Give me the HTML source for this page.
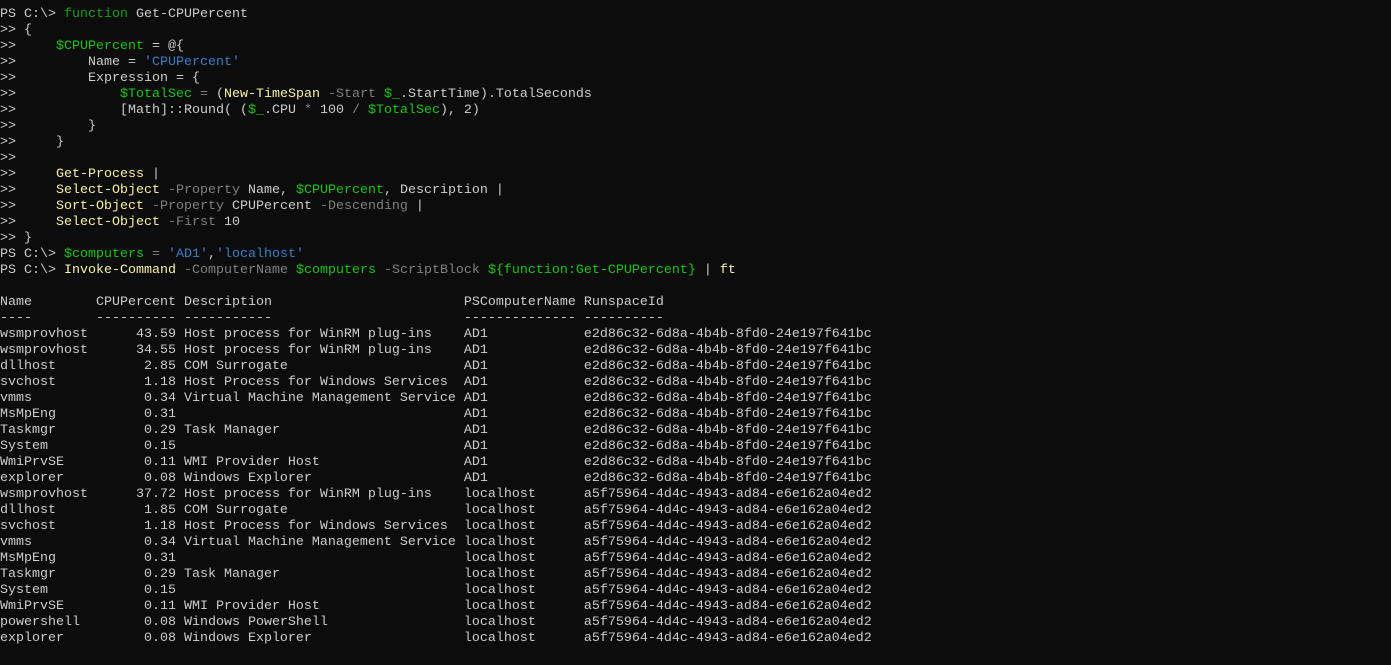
<!DOCTYPE html>
<html><head><style>
html,body{margin:0;padding:0;background:#0c0c0c;width:1391px;height:665px;overflow:hidden}
pre{margin:0;padding:7px 0 0 0;font-family:"Liberation Mono",monospace;font-size:13.33px;line-height:16px;color:#cccccc;white-space:pre}
.g{color:#16c60c}.gd{color:#13a10e}.y{color:#f9f1a5}.b{color:#3a7fc8}.p{color:#808080}
</style></head><body><pre>PS C:\&gt; <span class="gd">function</span> Get-CPUPercent
&gt;&gt; {
&gt;&gt;     <span class="g">$CPUPercent</span> = @{
&gt;&gt;         Name = <span class="b">'CPUPercent'</span>
&gt;&gt;         Expression = {
&gt;&gt;             <span class="g">$TotalSec</span> <span class="p">=</span> (<span class="y">New-TimeSpan</span> <span class="p">-Start</span> <span class="g">$_</span>.StartTime).TotalSeconds
&gt;&gt;             [Math]::Round( (<span class="g">$_</span>.CPU <span class="p">*</span> 100 <span class="p">/</span> <span class="g">$TotalSec</span>), 2)
&gt;&gt;         }
&gt;&gt;     }
&gt;&gt;
&gt;&gt;     <span class="y">Get-Process</span> |
&gt;&gt;     <span class="y">Select-Object</span> <span class="p">-Property</span> Name, <span class="g">$CPUPercent</span>, Description |
&gt;&gt;     <span class="y">Sort-Object</span> <span class="p">-Property</span> CPUPercent <span class="p">-Descending</span> |
&gt;&gt;     <span class="y">Select-Object</span> <span class="p">-First</span> 10
&gt;&gt; }
PS C:\&gt; <span class="g">$computers</span> <span class="p">=</span> <span class="b">'AD1'</span>,<span class="b">'localhost'</span>
PS C:\&gt; <span class="y">Invoke-Command</span> <span class="p">-ComputerName</span> <span class="g">$computers</span> <span class="p">-ScriptBlock</span> <span class="g">${function:Get-CPUPercent}</span> | <span class="y">ft</span>

Name        CPUPercent Description                        PSComputerName RunspaceId
----        ---------- -----------                        -------------- ----------
wsmprovhost      43.59 Host process for WinRM plug-ins    AD1            e2d86c32-6d8a-4b4b-8fd0-24e197f641bc
wsmprovhost      34.55 Host process for WinRM plug-ins    AD1            e2d86c32-6d8a-4b4b-8fd0-24e197f641bc
dllhost           2.85 COM Surrogate                      AD1            e2d86c32-6d8a-4b4b-8fd0-24e197f641bc
svchost           1.18 Host Process for Windows Services  AD1            e2d86c32-6d8a-4b4b-8fd0-24e197f641bc
vmms              0.34 Virtual Machine Management Service AD1            e2d86c32-6d8a-4b4b-8fd0-24e197f641bc
MsMpEng           0.31                                    AD1            e2d86c32-6d8a-4b4b-8fd0-24e197f641bc
Taskmgr           0.29 Task Manager                       AD1            e2d86c32-6d8a-4b4b-8fd0-24e197f641bc
System            0.15                                    AD1            e2d86c32-6d8a-4b4b-8fd0-24e197f641bc
WmiPrvSE          0.11 WMI Provider Host                  AD1            e2d86c32-6d8a-4b4b-8fd0-24e197f641bc
explorer          0.08 Windows Explorer                   AD1            e2d86c32-6d8a-4b4b-8fd0-24e197f641bc
wsmprovhost      37.72 Host process for WinRM plug-ins    localhost      a5f75964-4d4c-4943-ad84-e6e162a04ed2
dllhost           1.85 COM Surrogate                      localhost      a5f75964-4d4c-4943-ad84-e6e162a04ed2
svchost           1.18 Host Process for Windows Services  localhost      a5f75964-4d4c-4943-ad84-e6e162a04ed2
vmms              0.34 Virtual Machine Management Service localhost      a5f75964-4d4c-4943-ad84-e6e162a04ed2
MsMpEng           0.31                                    localhost      a5f75964-4d4c-4943-ad84-e6e162a04ed2
Taskmgr           0.29 Task Manager                       localhost      a5f75964-4d4c-4943-ad84-e6e162a04ed2
System            0.15                                    localhost      a5f75964-4d4c-4943-ad84-e6e162a04ed2
WmiPrvSE          0.11 WMI Provider Host                  localhost      a5f75964-4d4c-4943-ad84-e6e162a04ed2
powershell        0.08 Windows PowerShell                 localhost      a5f75964-4d4c-4943-ad84-e6e162a04ed2
explorer          0.08 Windows Explorer                   localhost      a5f75964-4d4c-4943-ad84-e6e162a04ed2
</pre></body></html>
